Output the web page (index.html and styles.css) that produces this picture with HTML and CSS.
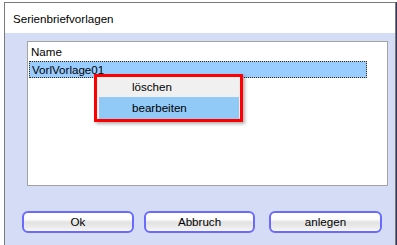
FILE: index.html
```html
<!DOCTYPE html>
<html lang="de">
<head>
    <meta charset="UTF-8">
    <title>Serienbriefvorlagen</title>
    <link rel="stylesheet" href="styles.css">
</head>
<body>
    <div class="window">
        <div class="titlebar">Serienbriefvorlagen</div>

        <div class="client">
            <div class="listbox">
                <div class="list-header">Name</div>
                <div class="list-row selected">VorlVorlage01</div>

                <!-- context menu over the list -->
                <div class="context-menu">
                    <div class="menu-item">löschen</div>
                    <div class="menu-item active">bearbeiten</div>
                </div>
            </div>

            <div class="buttons">
                <button class="btn btn-ok">Ok</button>
                <button class="btn btn-cancel">Abbruch</button>
                <button class="btn btn-add">anlegen</button>
            </div>
        </div>
    </div>
</body>
</html>
```

FILE: styles.css
```css
body {
    margin: 0;
    background-color: #fff;
    font-family: "Liberation Sans", Arial, sans-serif;
    font-size: 11.6px;
    color: #000;
    overflow: hidden;
}

.window {
    margin: 2px 0 0 4px;
    width: 392px;
    height: 243px;
    box-sizing: border-box;
    border: 1px solid #7a7a7a;
    border-bottom: none;
    display: flex;
    flex-direction: column;
    box-shadow: 1px 0 0 #34345c;
}

.titlebar {
    height: 30px;
    box-sizing: border-box;
    padding: 8px 0 0 8px;
    line-height: 16px;
    background-color: #fff;
}

.client {
    flex: 1;
    background-color: #d4ddf5;
    padding: 8px 7px 0 22px;
}

.listbox {
    position: relative;
    height: 145px;
    box-sizing: border-box;
    border: 1px solid #a3a3a3;
    background-color: #fff;
}

.list-header {
    margin-top: 2px;
    height: 17px;
    padding-left: 3px;
    line-height: 16px;
}

.list-row {
    margin-left: 1px;
    width: 338px;
    box-sizing: border-box;
    padding-left: 2px;
    line-height: 15px;
    border: 1px solid transparent;
}

.list-row.selected {
    background-color: #99ccff;
    border: 1px dotted #3b2a16;
}

.context-menu {
    position: absolute;
    left: 66px;
    top: 32px;
    width: 149px;
    height: 48px;
    box-sizing: border-box;
    border: 3px solid #ff0000;
    background-color: #f0f0f0;
    padding: 0 1px 0 2px;
    box-shadow: 2px 2px 3px rgba(0, 0, 0, 0.3);
}

.menu-item {
    height: 20px;
    padding-left: 33px;
    line-height: 20px;
}

.menu-item.active {
    height: 22px;
    line-height: 22px;
    background-color: #91c9f7;
}

.buttons {
    display: flex;
    margin: 25px 0 0 -5px;
}

.btn {
    height: 22px;
    box-sizing: border-box;
    padding: 0;
    border: 2px solid #6a6aff;
    border-radius: 6px;
    background: linear-gradient(to bottom, #ffffff 0%, #fcfcfc 35%, #e2e2e2 52%, #ececec 80%, #f7f7f7 100%);
    font-family: inherit;
    font-size: inherit;
    line-height: 18px;
    color: #000;
    text-align: center;
}

.btn-ok {
    width: 112px;
}

.btn-cancel {
    width: 111px;
    margin-left: 10px;
}

.btn-add {
    width: 113px;
    margin-left: 14px;
}
```
